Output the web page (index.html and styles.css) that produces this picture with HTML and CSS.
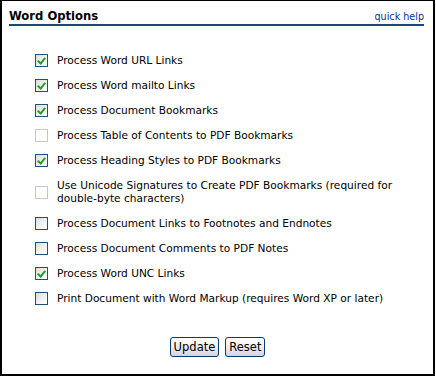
FILE: index.html
```html
<!DOCTYPE html>
<html lang="en">
<head>
    <meta charset="UTF-8">
    <meta name="viewport" content="width=device-width, initial-scale=1.0">
    <title>Word Options</title>
    <link rel="stylesheet" href="styles.css">
</head>
<body>
    <div class="panel">
        <div class="panel-header">
            <h1>Word Options</h1>
            <a class="help-link" href="#">quick help</a>
        </div>
        <div class="options">
            <label class="option"><span class="box checked"></span><span class="label">Process Word URL Links</span></label>
            <label class="option"><span class="box checked"></span><span class="label">Process Word mailto Links</span></label>
            <label class="option"><span class="box checked"></span><span class="label">Process Document Bookmarks</span></label>
            <label class="option"><span class="box disabled"></span><span class="label">Process Table of Contents to PDF Bookmarks</span></label>
            <label class="option"><span class="box checked"></span><span class="label">Process Heading Styles to PDF Bookmarks</span></label>
            <label class="option"><span class="box disabled"></span><span class="label">Use Unicode Signatures to Create PDF Bookmarks (required for<br>double-byte characters)</span></label>
            <label class="option"><span class="box"></span><span class="label">Process Document Links to Footnotes and Endnotes</span></label>
            <label class="option"><span class="box"></span><span class="label">Process Document Comments to PDF Notes</span></label>
            <label class="option"><span class="box checked"></span><span class="label">Process Word UNC Links</span></label>
            <label class="option"><span class="box"></span><span class="label">Print Document with Word Markup (requires Word XP or later)</span></label>
        </div>
        <div class="buttons">
            <button class="btn">Update</button>
            <button class="btn">Reset</button>
        </div>
    </div>
</body>
</html>
```

FILE: styles.css
```css
body {
    margin: 0;
    background-color: white;
    font-family: "DejaVu Sans", Verdana, sans-serif;
    font-size: 10.6px;
    color: black;
}
.panel {
    width: 435px;
    height: 376px;
    box-sizing: border-box;
    border-style: solid;
    border-color: black;
    border-width: 1px 2px 2px 2px;
    background: white;
}
.panel-header {
    display: flex;
    justify-content: space-between;
    align-items: baseline;
    margin: 0 9px 0 7px;
    height: 23px;
    border-bottom: 2px solid #17497f;
    box-sizing: content-box;
}
.panel-header h1 {
    margin: 0;
    font-size: 11.6px;
    font-weight: bold;
    line-height: 13px;
    padding-top: 9px;
}
.help-link {
    color: #00339a;
    text-decoration: none;
    font-size: 9.6px;
    line-height: 13px;
}
.options {
    display: flex;
    flex-direction: column;
    gap: 12px;
    margin-top: 28px;
    padding-left: 33px;
}
.option {
    display: flex;
    align-items: center;
    gap: 9px;
    line-height: 13px;
}
.box {
    flex: none;
    width: 11px;
    height: 11px;
    border: 1px solid #1c5180;
    background: linear-gradient(135deg, #dcdcd7 0%, #f4f4f1 60%, #ffffff 100%);
    position: relative;
}
.box.checked::after {
    content: "";
    position: absolute;
    left: 3px;
    top: 1px;
    width: 3px;
    height: 6px;
    border: solid #21a121;
    border-width: 0 2px 2px 0;
    transform: rotate(40deg);
}
.box.disabled {
    border-color: #cac8bb;
    background: white;
}
.buttons {
    display: flex;
    justify-content: center;
    gap: 6px;
    margin-top: 32px;
}
.btn {
    font-family: "DejaVu Sans", Verdana, sans-serif;
    font-size: 11.5px;
    height: 20px;
    padding: 0 3px;
    border: 1px solid #003c74;
    border-radius: 3px;
    background: linear-gradient(#ffffff 0%, #f0eff5 45%, #d6d2e4 100%);
    color: black;
}
```
